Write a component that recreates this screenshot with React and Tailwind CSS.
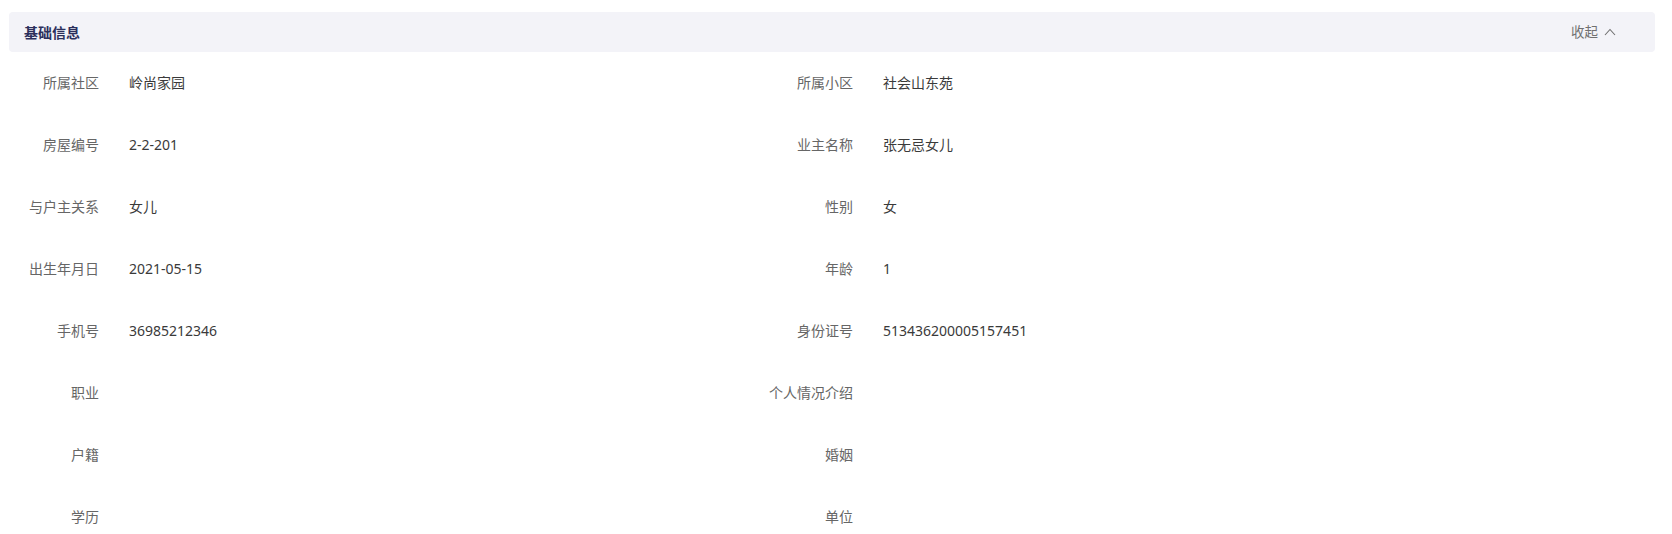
const ROWS = [
  ['所属社区', '岭尚家园', '所属小区', '社会山东苑'],
  ['房屋编号', '2-2-201', '业主名称', '张无忌女儿'],
  ['与户主关系', '女儿', '性别', '女'],
  ['出生年月日', '2021-05-15', '年龄', '1'],
  ['手机号', '36985212346', '身份证号', '513436200005157451'],
  ['职业', '', '个人情况介绍', ''],
  ['户籍', '', '婚姻', ''],
  ['学历', '', '单位', ''],
];

function Field({ label, value }) {
  return (
    <div className="flex items-center h-[62px]">
      <div className="w-[99px] shrink-0 text-right text-[14px] text-[#666666]">{label}</div>
      <div className="ml-[30px] text-[14px] text-[#3a3a3a]">{value}</div>
    </div>
  );
}

export default function App() {
  return (
    <div className="bg-white min-h-screen pt-[12px]" style={{ fontFamily: '"Noto Sans", "Noto Sans CJK SC", sans-serif' }}>
      <div className="ml-[9px] mr-[17px] h-[40px] bg-[#f3f3f8] rounded-[4px] flex items-center justify-between pl-[15px] pr-[39px]">
        <span className="text-[14px] font-bold text-[#2b2f5c]">基础信息</span>
        <button className="flex items-center gap-[6px] text-[13.5px] text-[#707070]">
          收起
          <svg width="12" height="8" viewBox="0 0 12 8" fill="none">
            <polyline points="1,7 6,1.5 11,7" stroke="#707070" strokeWidth="1.1" />
          </svg>
        </button>
      </div>
      <div className="grid grid-cols-[754px_1fr] -mt-[1px]">
        {ROWS.map(([l1, v1, l2, v2]) => (
          <div key={l1} className="contents">
            <Field label={l1} value={v1} />
            <Field label={l2} value={v2} />
          </div>
        ))}
      </div>
    </div>
  );
}
